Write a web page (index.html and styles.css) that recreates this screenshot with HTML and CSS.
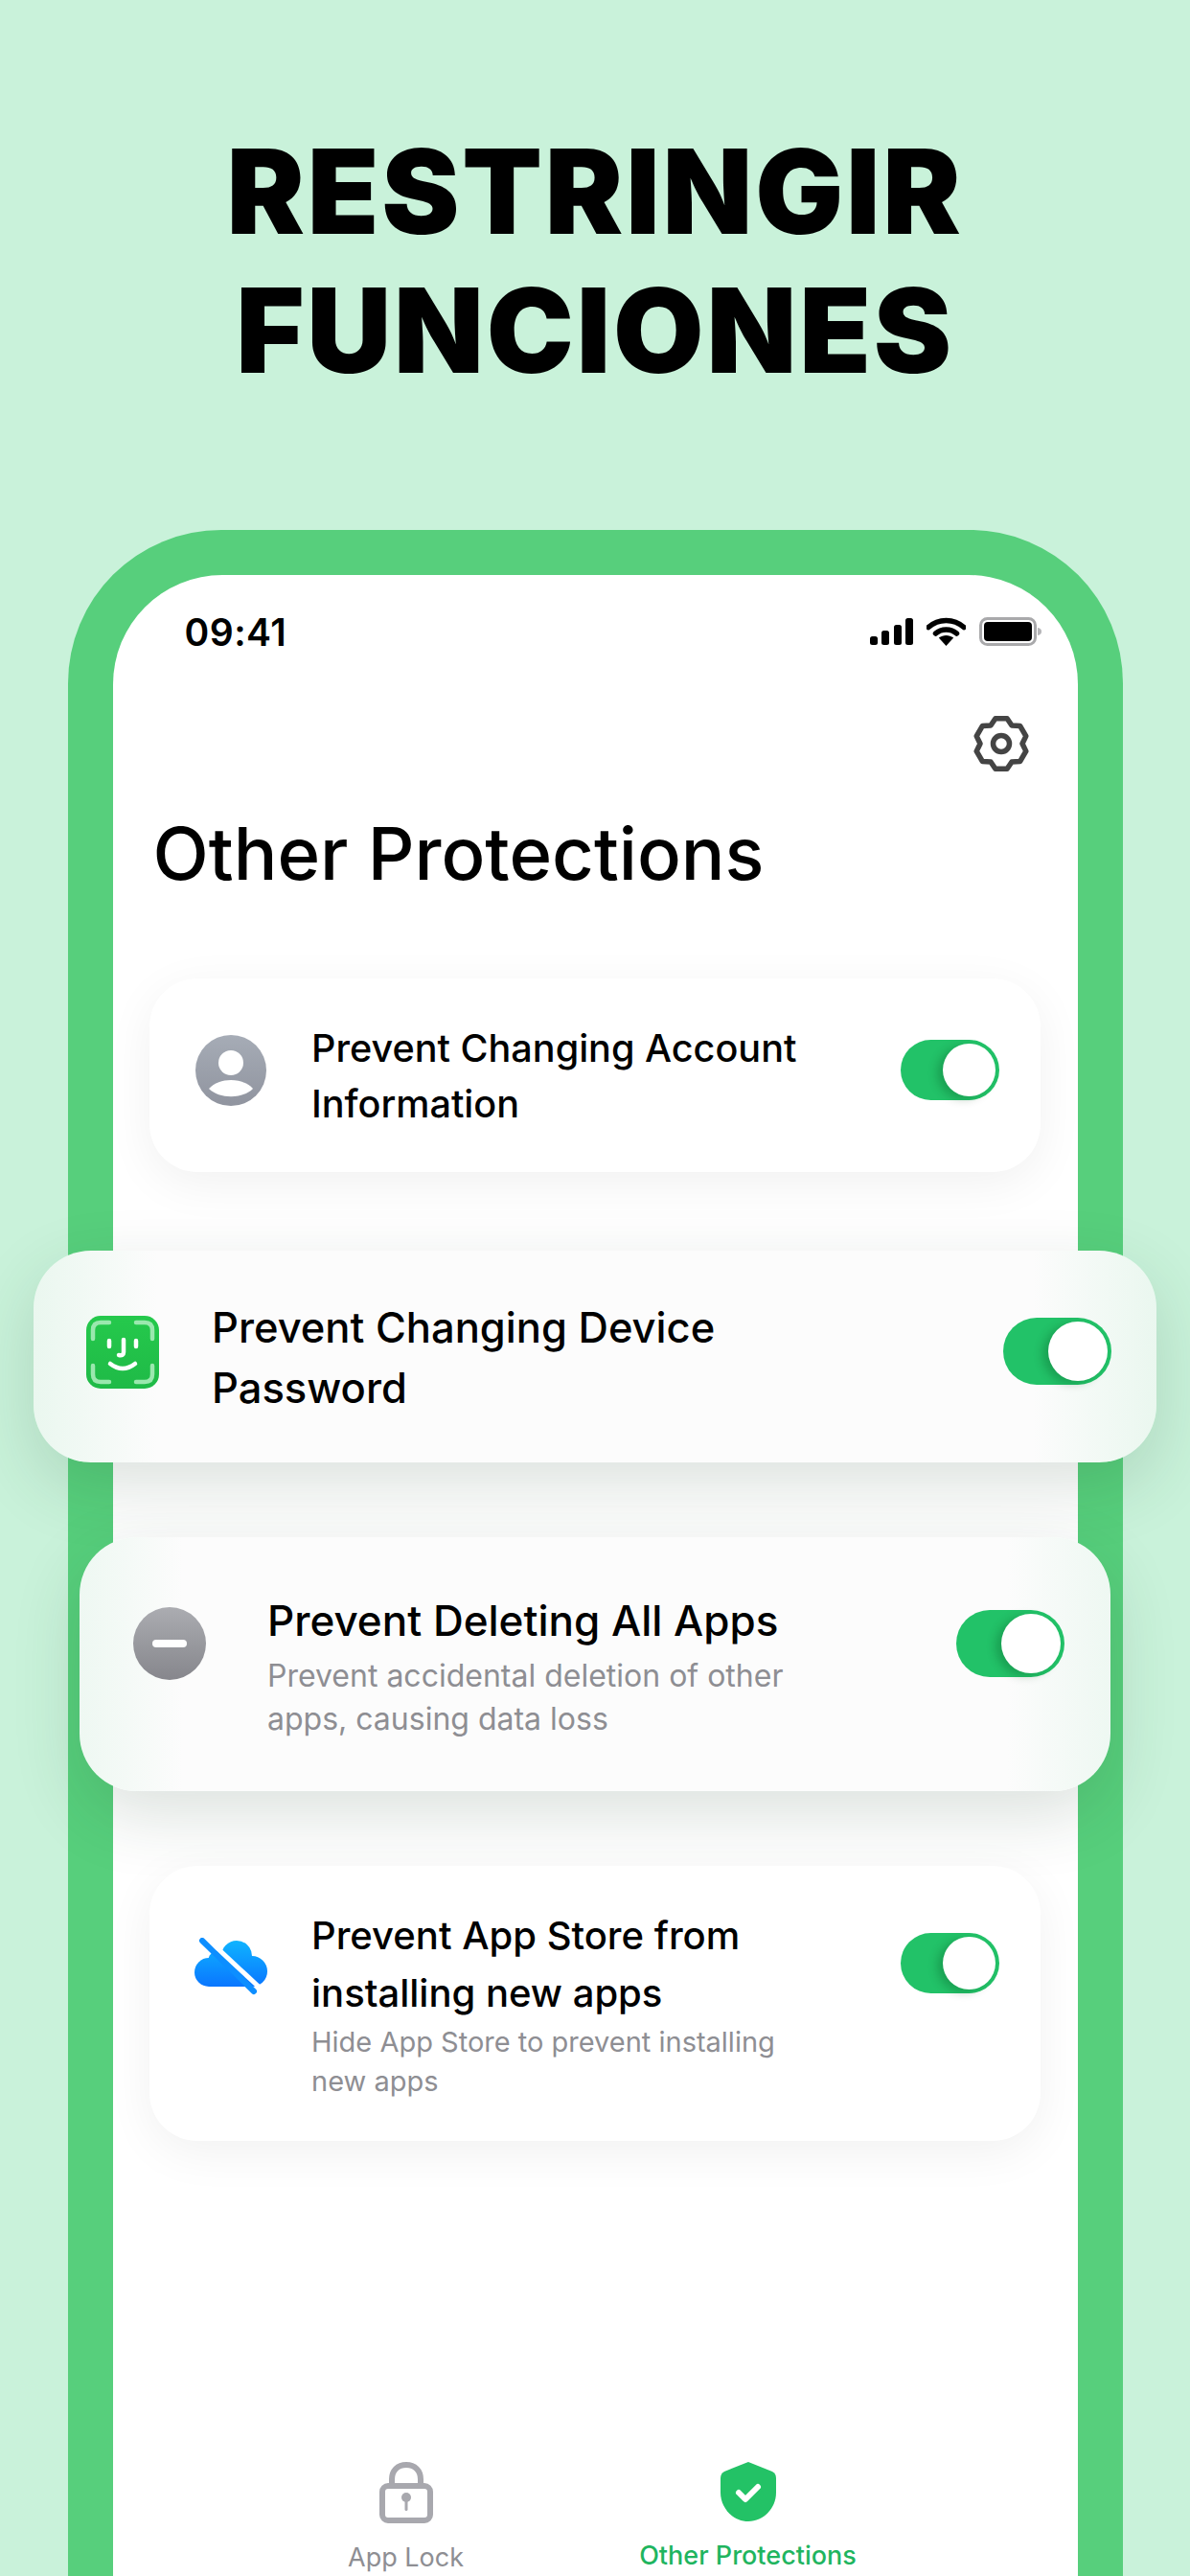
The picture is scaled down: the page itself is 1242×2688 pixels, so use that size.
FILE: index.html
```html
<!DOCTYPE html>
<html lang="en">
<head>
<meta charset="utf-8">
<title>Other Protections</title>
<link rel="stylesheet" href="styles.css">
</head>
<body>
<main class="page">
  <h1 class="headline">RESTRINGIR<br>FUNCIONES</h1>
  <section class="phone">
    <div class="screen">
      <header class="status">
        <span class="time">09:41</span>
        <div class="status-icons">
          <svg class="i-signal" viewBox="0 0 45 28"><rect x="0" y="19" width="8" height="9" rx="2.5"/><rect x="12" y="13" width="8" height="15" rx="2.5"/><rect x="25" y="7" width="8" height="21" rx="2.5"/><rect x="37" y="0" width="8" height="28" rx="2.5"/></svg>
          <svg class="i-wifi" viewBox="0 0 41 30"><path class="arc" d="M2 10.5C12.500 1 28.500 1 39 10.500"/><path class="arc" d="M9.500 17C15.500 11.500 25.500 11.500 31.500 17"/><path class="wedge" d="M12.800 21.500C17.500 18 23.500 18 28.200 21.500L20.500 30Z"/></svg>
          <svg class="i-battery" viewBox="0 0 65 30"><rect class="shell" x="1.500" y="1.500" width="57" height="27" rx="7"/><rect x="5" y="5" width="50" height="20" rx="4"/><path class="nub" d="M61 11C64 11.500 65 13 65 15S64 18.500 61 19Z"/></svg>
        </div>
      </header>
      <div class="toolbar">
        <svg class="i-gear" viewBox="0 0 60 60"><path class="gear" d="M23.900 3.700L36.100 3.700L41 10.950L49.700 11.600L55.800 22.100L52 30L55.800 37.900L49.700 48.400L41 49.050L36.100 56.300L23.900 56.300L19 49.050L10.300 48.400L4.200 37.900L8 30L4.200 22.100L10.300 11.600L19 10.950Z"/><circle class="gear" cx="30" cy="30" r="8.500"/></svg>
      </div>
      <h2 class="title">Other Protections</h2>
      <div class="cards">
        <article class="card card-account">
          <svg class="icon" viewBox="0 0 74 74"><defs><linearGradient id="gp" x1="0" y1="0" x2="0" y2="1"><stop offset="0" stop-color="#a6acb6"/><stop offset="1" stop-color="#90949f"/></linearGradient></defs><circle cx="37" cy="37" r="37" fill="url(#gp)"/><circle cx="37" cy="29" r="13" fill="#fff"/><path d="M14 56C25 44 49 44 60 56C49 67 25 67 14 56Z" fill="#fff"/></svg>
          <div class="copy"><h3 class="name">Prevent Changing Account<br>Information</h3></div>
          <span class="switch"><span class="knob"></span></span>
        </article>
        <article class="card card-device">
          <svg class="icon" viewBox="0 0 76 76"><defs><linearGradient id="gf" x1="0" y1="0" x2="0" y2="1"><stop offset="0" stop-color="#25c94c"/><stop offset="1" stop-color="#1fba47"/></linearGradient></defs><rect width="76" height="76" rx="15" fill="url(#gf)"/><path class="face-frame" d="M7 24V15Q7 7 15 7H24M52 7H61Q69 7 69 15V24M69 52V61Q69 69 61 69H52M24 69H15Q7 69 7 61V52"/><path class="face" d="M24 26V32M52 26V32M39 25V38Q39 42 34 41M25 50Q38 60 51 50"/></svg>
          <div class="copy"><h3 class="name">Prevent Changing Device<br>Password</h3></div>
          <span class="switch"><span class="knob"></span></span>
        </article>
        <article class="card card-delete">
          <svg class="icon" viewBox="0 0 76 76"><defs><linearGradient id="gm" x1="0" y1="0" x2="0" y2="1"><stop offset="0" stop-color="#abacb1"/><stop offset="1" stop-color="#86868c"/></linearGradient></defs><circle cx="38" cy="38" r="38" fill="url(#gm)"/><rect x="20" y="34" width="36" height="8" rx="4" fill="#fff"/></svg>
          <div class="copy"><h3 class="name">Prevent Deleting All Apps</h3><p class="note">Prevent accidental deletion of other<br>apps, causing data loss</p></div>
          <span class="switch"><span class="knob"></span></span>
        </article>
        <article class="card card-store">
          <svg class="icon" viewBox="0 0 76 60"><defs><linearGradient id="gc" gradientUnits="userSpaceOnUse" x1="0" y1="3" x2="0" y2="51"><stop offset="0" stop-color="#0fb4ff"/><stop offset="1" stop-color="#0a76ff"/></linearGradient></defs><g fill="url(#gc)"><circle cx="15" cy="36" r="15"/><circle cx="26" cy="25" r="12"/><circle cx="44" cy="19" r="16"/><circle cx="60" cy="35" r="16"/><rect x="15" y="25" width="45" height="26"/></g><path class="cloud-gap" d="M12 0L68 52"/><path class="cloud-slash" d="M8 3L62 56"/></svg>
          <div class="copy"><h3 class="name">Prevent App Store from<br>installing new apps</h3><p class="note">Hide App Store to prevent installing<br>new apps</p></div>
          <span class="switch"><span class="knob"></span></span>
        </article>
      </div>
      <nav class="tabs">
        <div class="tab">
          <svg class="i-lock" viewBox="0 0 56 64"><rect class="lock" x="3" y="25" width="50" height="36" rx="6"/><path class="lock" d="M13 25V18C13 9 19 3 28 3S43 9 43 18V25"/><circle cx="28" cy="37" r="5" fill="#a8a8ae"/><rect x="26.500" y="38" width="3" height="13" rx="1.500" fill="#a8a8ae"/></svg>
          <span class="tab-label">App Lock</span>
        </div>
        <div class="tab tab-active">
          <svg class="i-shield" viewBox="0 0 58 62"><path d="M29 0L54 10Q58 12 58 17V32C58 48 45 62 29 62S0 48 0 32V17Q0 12 4 10Z" fill="#23c266"/><path class="check" d="M19 32L26 39L39 26"/></svg>
          <span class="tab-label">Other Protections</span>
        </div>
      </nav>
    </div>
  </section>
</main>
</body>
</html>
```

FILE: styles.css
```css
* { box-sizing: border-box; }
html, body { margin: 0; padding: 0; }
body {
  width: 1242px;
  height: 2688px;
  overflow: hidden;
  background: #c9f2da;
  font-family: Inter, "Noto Sans", "Liberation Sans", sans-serif;
  color: #000;
}
.page {
  height: 2688px;
  display: flex;
  flex-direction: column;
  align-items: center;
  padding-top: 127px;
}
.headline {
  margin: 0;
  font-size: 122px;
  line-height: 145px;
  font-weight: 900;
  letter-spacing: 2.8px;
  text-align: center;
  color: #000;
}
.phone {
  margin-top: 136px;
  width: 1101px;
  flex: 1;
  background: #57cf7c;
  border-radius: 160px 160px 0 0;
  padding: 47px 47px 0;
  display: flex;
}
.screen {
  flex: 1;
  min-width: 0;
  background: #fff;
  border-radius: 114px 114px 0 0;
  padding-top: 36px;
  display: flex;
  flex-direction: column;
}
.status {
  display: flex;
  justify-content: space-between;
  align-items: center;
  height: 46px;
  padding: 0 38px 0 75px;
}
.time { font-size: 39px; font-weight: 600; letter-spacing: 0.5px; }
.status-icons { display: flex; align-items: center; gap: 14px; }
.i-signal { width: 45px; height: 28px; fill: #000; }
.i-wifi { width: 41px; height: 30px; margin-right: 0; }
.arc { fill: none; stroke: #000; stroke-width: 5.5px; stroke-linecap: round; }
.wedge { fill: #000; }
.i-battery { width: 65px; height: 30px; fill: #000; }
.shell { fill: none; stroke: #a9a9ab; stroke-width: 3px; }
.nub { fill: #b5b5b8; }
.toolbar {
  display: flex;
  justify-content: flex-end;
  padding-right: 50px;
  margin-top: 64px;
}
.i-gear { width: 60px; height: 60px; }
.gear { fill: none; stroke: #444; stroke-width: 5.500px; stroke-linejoin: round; }
.title {
  margin: 39px 0 0 42px;
  font-size: 76px;
  line-height: 90px;
  font-weight: 500;
  color: #000;
}
.cards {
  display: flex;
  flex-direction: column;
  align-items: center;
}
.card {
  display: flex;
  align-items: flex-start;
  flex: none;
  background: #fff;
}
.icon { flex: none; }
.copy { flex: 1; min-width: 0; }
.name { margin: 0; font-weight: 500; color: #000; }
.note { margin: 0; color: #8e8e93; font-weight: 400; }
.switch {
  flex: none;
  display: flex;
  justify-content: flex-end;
  align-items: center;
  border-radius: 40px;
  background: #22c268;
  padding: 4px;
}
.knob {
  display: block;
  height: 100%;
  aspect-ratio: 1;
  border-radius: 50%;
  background: #fff;
  box-shadow: -6px 3px 10px rgba(0, 60, 20, 0.25);
}
.card-account {
  width: 930px;
  margin-top: 86px;
  padding: 44px 43px 42px 48px;
  border-radius: 50px;
  box-shadow: 0 12px 50px rgba(0, 0, 0, 0.06);
}
.card-account .icon { width: 74px; height: 74px; margin: 15px 47px 0 0; }
.card-account .name { font-size: 39.600px; line-height: 58px; }
.card-account .switch, .card-store .switch { width: 103px; height: 63px; margin-top: 20px; }
.card-device {
  width: 1172px;
  margin-top: 82px;
  padding: 49px 47px 46px 55px;
  border-radius: 60px;
  background: linear-gradient(90deg, #eaf7ef 0, #fcfcfc 11%, #fcfcfc 89%, #eaf7ef 100%);
  box-shadow: 0 24px 70px rgba(30, 70, 45, 0.16);
}
.card-device .icon { width: 76px; height: 76px; margin: 19px 55px 0 0; }
.card-device .name { font-size: 43.500px; line-height: 63px; }
.card-device .switch, .card-delete .switch { width: 113px; height: 70px; margin-top: 21px; }
.card-delete {
  width: 1076px;
  margin-top: 78px;
  padding: 57px 48px 53px 56px;
  border-radius: 60px;
  background: linear-gradient(90deg, #eef8f2 0, #fcfcfc 10%, #fcfcfc 90%, #eef8f2 100%);
  box-shadow: 0 24px 70px rgba(30, 70, 45, 0.16);
}
.card-delete .icon { width: 76px; height: 76px; margin: 16px 64px 0 0; }
.card-delete .name { font-size: 44px; line-height: 60px; }
.card-delete .note { font-size: 32px; line-height: 45px; margin-top: 5px; }
.card-delete .switch { margin-top: 19px; }
.card-store {
  width: 930px;
  margin-top: 78px;
  padding: 43px 43px 42px 47px;
  border-radius: 50px;
  box-shadow: 0 12px 50px rgba(0, 0, 0, 0.06);
}
.card-store .icon { width: 76px; height: 60px; margin: 32px 46px 0 0; }
.card-store .name { font-size: 40px; line-height: 60px; }
.card-store .note { font-size: 29px; line-height: 41px; }
.card-store .switch { margin-top: 27px; }
.face-frame { fill: none; stroke: #9ae8ae; stroke-width: 4.500px; stroke-linecap: round; }
.face { fill: none; stroke: #fff; stroke-width: 4.500px; stroke-linecap: round; }
.cloud-gap { fill: none; stroke: #fff; stroke-width: 5px; }
.cloud-slash { fill: none; stroke: #0d8eff; stroke-width: 6px; stroke-linecap: round; }
.tabs {
  margin-top: auto;
  height: 119px;
  display: grid;
  grid-template-columns: 360px 354px;
  justify-content: start;
  padding-left: 126px;
}
.tab { display: flex; flex-direction: column; align-items: center; }
.i-lock { width: 56px; height: 64px; }
.lock { fill: none; stroke: #a8a8ae; stroke-width: 6px; }
.i-shield { width: 58px; height: 62px; }
.check { fill: none; stroke: #fff; stroke-width: 6px; stroke-linecap: round; stroke-linejoin: round; }
.tab-label { margin-top: 18px; font-size: 27px; line-height: 36px; color: #8e8e93; white-space: nowrap; }
.tab-active .tab-label { color: #1fb55f; font-weight: 500; }
```
